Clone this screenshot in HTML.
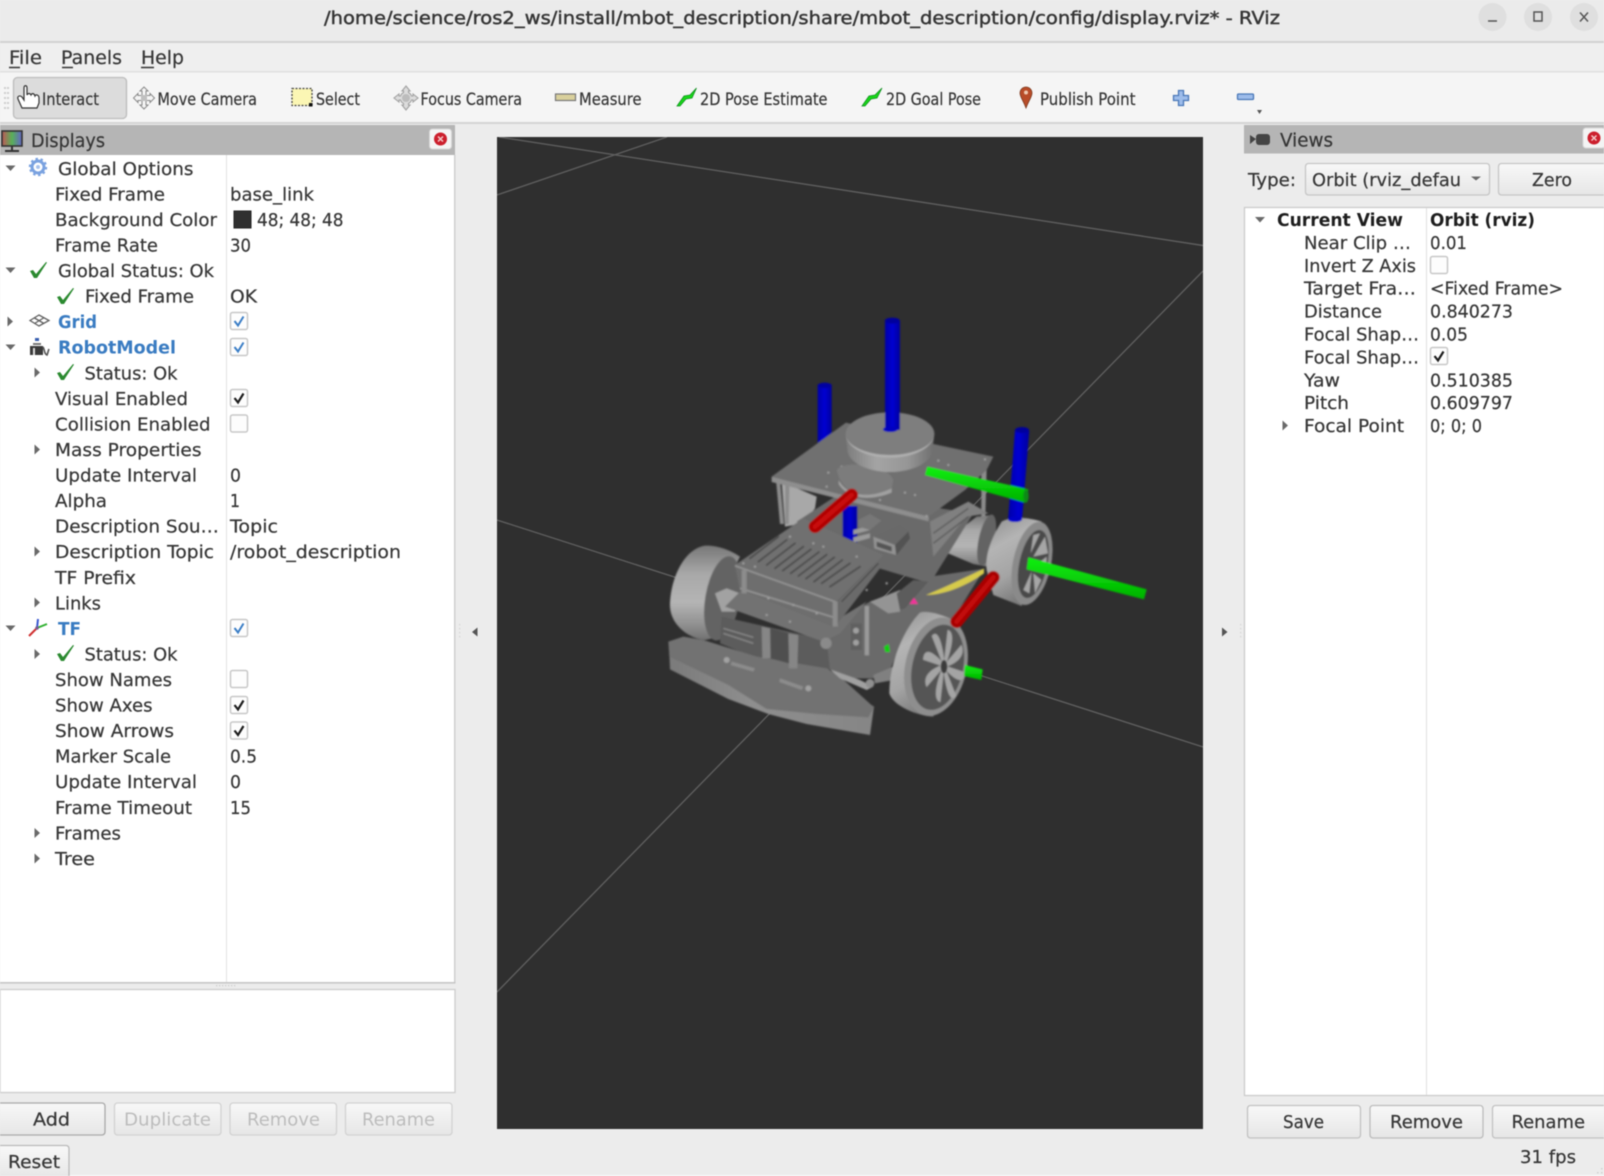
<!DOCTYPE html>
<html>
<head>
<meta charset="utf-8">
<title>RViz</title>
<style>
html,body{margin:0;padding:0;background:#ececec;width:1604px;height:1176px;overflow:hidden}
svg{display:block;filter:blur(.45px)}
text{font-family:"DejaVu Sans","Liberation Sans",sans-serif;font-size:18px;fill:#363636;stroke:#363636;stroke-width:.22px}
.tb{font-size:17px}
.lnk{fill:#3a7cc2;stroke:#3a7cc2;font-weight:bold;stroke-width:0}
.b{font-weight:bold;fill:#1e1e1e;stroke-width:0}
.dis{fill:#bcbcbc;stroke-width:0}
</style>
</head>
<body>
<svg xmlns="http://www.w3.org/2000/svg" width="1604" height="1176" viewBox="0 0 1604 1176">
<defs>
<linearGradient id="btn" x1="0" y1="0" x2="0" y2="1"><stop offset="0" stop-color="#f8f8f8"/><stop offset="1" stop-color="#e6e6e6"/></linearGradient>
<linearGradient id="tread" x1="0" y1="0" x2="0" y2="1"><stop offset="0" stop-color="#777"/><stop offset=".3" stop-color="#a8a8a8"/><stop offset=".6" stop-color="#b4b4b4"/><stop offset=".85" stop-color="#8e8e8e"/><stop offset="1" stop-color="#707070"/></linearGradient>
<linearGradient id="tread2" x1="0" y1="0" x2=".35" y2="1"><stop offset="0" stop-color="#8e8e8e"/><stop offset=".35" stop-color="#b4b4b4"/><stop offset=".7" stop-color="#a4a4a4"/><stop offset="1" stop-color="#7c7c7c"/></linearGradient>
<linearGradient id="lid" x1="0" y1="0" x2="1" y2="0"><stop offset="0" stop-color="#7c7c7c"/><stop offset=".35" stop-color="#a4a4a4"/><stop offset=".7" stop-color="#969696"/><stop offset="1" stop-color="#6e6e6e"/></linearGradient>
<linearGradient id="side" x1="0" y1="0" x2="1" y2="0"><stop offset="0" stop-color="#7a7a7a"/><stop offset=".4" stop-color="#8e8e8e"/><stop offset="1" stop-color="#858585"/></linearGradient>
<linearGradient id="grn" x1="0" y1="0" x2="0" y2="1"><stop offset="0" stop-color="#10f010"/><stop offset="1" stop-color="#00b000"/></linearGradient>
<linearGradient id="blu" x1="0" y1="0" x2="1" y2="0"><stop offset="0" stop-color="#0000a8"/><stop offset=".5" stop-color="#0000d2"/><stop offset="1" stop-color="#00009c"/></linearGradient>
<linearGradient id="scr" x1="0" y1="0" x2="1" y2="0"><stop offset="0" stop-color="#c05858"/><stop offset=".5" stop-color="#58b058"/><stop offset="1" stop-color="#6464c8"/></linearGradient>
<filter id="soft" x="-5%" y="-5%" width="110%" height="110%"><feGaussianBlur stdDeviation="2.4"/></filter>
<clipPath id="cb"><rect x="1305" y="163" width="156" height="32"/></clipPath>
<clipPath id="vp"><rect x="497" y="137" width="706" height="992"/></clipPath>
<path id="ck" d="M-8,1 L-5,0 L-2,4 L8,-8 L9,-7.5 L-1,8 L-4,8 Z" fill="#2b8a30"/>
<g id="box"><rect x="0.5" y="0.5" width="17" height="17" rx="2" fill="#fdfdfd" stroke="#c8c8c8" stroke-width="1.5"/></g>
<g id="boxk"><use href="#box"/><path d="M4.5,9 L8,13.5 L13.5,4.5" fill="none" stroke="#1d1d1d" stroke-width="2.2"/></g>
<g id="boxb"><use href="#box"/><path d="M4.5,9 L8,13.5 L13.5,4.5" fill="none" stroke="#3b7ec6" stroke-width="2"/></g>
<path id="ad" d="M-5,-2.5 L5,-2.5 L0,3 Z" fill="#6a6a6a"/>
<path id="ar" d="M-2.5,-5 L3,0 L-2.5,5 Z" fill="#6a6a6a"/>
<g id="close"><rect x="0" y="0" width="22" height="20" rx="3" fill="#f4f4f4" stroke="#d8d8d8"/><circle cx="11" cy="10" r="6.5" fill="#cc1f2d"/><path d="M8.5,7.5 L13.5,12.5 M13.5,7.5 L8.5,12.5" stroke="#f3c9c9" stroke-width="1.5"/></g>
<path id="fin" d="M0,-8 L12,-70 C30,-68 36,-50 8,-6 Z"/>
</defs>

<rect width="1604" height="1176" fill="#ececec"/>
<rect width="1604" height="41" fill="#ebebeb"/>
<rect y="41" width="1604" height="2" fill="#d2d2d2"/>
<rect y="43" width="1604" height="29" fill="#efefef"/>
<rect y="71" width="1604" height="1.5" fill="#e0e0e0"/>
<rect y="72.5" width="1604" height="49.5" fill="#f5f5f5"/>
<rect y="122" width="1604" height="2" fill="#d4d4d4"/>
<rect y="1175" width="1604" height="1" fill="#fafafa"/>

<text x="324" y="24" textLength="956" lengthAdjust="spacingAndGlyphs" style="stroke-width:.45px">/home/science/ros2_ws/install/mbot_description/share/mbot_description/config/display.rviz* - RViz</text>
<circle cx="1492.5" cy="17" r="14" fill="#dfdfdf"/><circle cx="1538" cy="17" r="14" fill="#dfdfdf"/><circle cx="1584" cy="17" r="14" fill="#dfdfdf"/>
<path d="M1488,21 H1497" stroke="#555" stroke-width="1.5"/>
<rect x="1534" y="12" width="8" height="9" fill="none" stroke="#555" stroke-width="1.5"/>
<path d="M1580,12.5 L1588,21.5 M1588,12.5 L1580,21.5" stroke="#555" stroke-width="1.5"/>

<text x="9" y="64" style="font-size:19px" textLength="33" lengthAdjust="spacingAndGlyphs">File</text>
<text x="61" y="64" style="font-size:19px" textLength="61" lengthAdjust="spacingAndGlyphs">Panels</text>
<text x="141" y="64" style="font-size:19px" textLength="43" lengthAdjust="spacingAndGlyphs">Help</text>
<path d="M9,67.5 H20 M62,67.5 H73 M141,67.5 H154" stroke="#333" stroke-width="1.6"/>

<g fill="#cfcfcf"><rect x="4" y="87" width="2" height="2"/><rect x="7" y="87" width="2" height="2"/><rect x="4" y="92" width="2" height="2"/><rect x="7" y="92" width="2" height="2"/><rect x="4" y="97" width="2" height="2"/><rect x="7" y="97" width="2" height="2"/><rect x="4" y="102" width="2" height="2"/><rect x="7" y="102" width="2" height="2"/><rect x="4" y="107" width="2" height="2"/><rect x="7" y="107" width="2" height="2"/></g>
<rect x="13.5" y="77.5" width="113" height="41" rx="4" fill="#dcdcdc" stroke="#bdbdbd" stroke-width="1.3"/>
<path d="M22,108 L18,99 C17,96 20,95 22,97 L24,100 L24,88 C24,85 27,85 27,88 L27,95 C28,93 30,93 31,95 C32,93 34,93 35,96 C36,94 39,95 39,98 L39,103 L37,108 Z" fill="#fff" stroke="#333" stroke-width="1.2"/>
<text class="tb" x="42" y="105" textLength="57" lengthAdjust="spacingAndGlyphs">Interact</text>
<g fill="#f4f4f4" stroke="#8a8a8a" stroke-width="1"><path d="M144,87 L148,91 H146 V95.5 H150 V93.5 L154.5,98 L150,102.5 V100.5 H146 V105 H148 L144,109 L140,105 H142 V100.5 H138 V102.5 L133.5,98 L138,93.5 V95.5 H142 V91 H140 Z"/></g>
<rect x="141" y="95" width="6" height="6" fill="#c0c0c0"/>
<text class="tb" x="157.5" y="105" textLength="99.5" lengthAdjust="spacingAndGlyphs">Move Camera</text>
<rect x="292" y="88.5" width="20" height="17" fill="#fbf6b4" stroke="#444" stroke-width="1.3" stroke-dasharray="2 1.5"/><rect x="309" y="103" width="3.5" height="3.5" fill="#111"/>
<text class="tb" x="316" y="105" textLength="44" lengthAdjust="spacingAndGlyphs">Select</text>
<path d="M406,86 L410,91 H408.5 V92.5 A6,6 0 0 1 411.5,96 H413 V94 L418,98 L413,102 V100 H411.5 A6,6 0 0 1 408.5,103.5 V105 H410 L406,110 L402,105 H403.5 V103.5 A6,6 0 0 1 400.5,100 H399 V102 L394,98 L399,94 V96 H400.5 A6,6 0 0 1 403.5,92.5 V91 H402 Z" fill="#dcdcdc" stroke="#a2a2a2" stroke-width="1.1"/>
<circle cx="406" cy="98" r="4" fill="#bcbcbc"/>
<text class="tb" x="420.5" y="105" textLength="101.5" lengthAdjust="spacingAndGlyphs">Focus Camera</text>
<rect x="555.5" y="94" width="20" height="6.5" fill="#d9d09c" stroke="#777" stroke-width="1.2"/>
<text class="tb" x="579" y="105" textLength="62.5" lengthAdjust="spacingAndGlyphs">Measure</text>
<path d="M677,106 L684,96 L690,95 L696.5,88 L692,98 L686,99 L680,106 Z" fill="#18d818" stroke="#0e8f1e" stroke-width=".8"/>
<text class="tb" x="700" y="105" textLength="127.5" lengthAdjust="spacingAndGlyphs">2D Pose Estimate</text>
<path d="M862,106 L869,96 L875,95 L882,88 L877,98 L871,99 L865,106 Z" fill="#18d818" stroke="#0e8f1e" stroke-width=".8"/>
<text class="tb" x="886" y="105" textLength="95" lengthAdjust="spacingAndGlyphs">2D Goal Pose</text>
<path d="M1026,108 C1023,100 1020,97 1020,93 A6,6 0 0 1 1032,93 C1032,97 1029,100 1026,108 Z" fill="#b84c28" stroke="#7a3a20" stroke-width=".8"/><circle cx="1026" cy="92.5" r="2" fill="#eec9b0"/>
<text class="tb" x="1040" y="105" textLength="95.5" lengthAdjust="spacingAndGlyphs">Publish Point</text>
<path d="M1178.5,90.5 H1183.5 V95.5 H1188.5 V100.5 H1183.5 V105.5 H1178.5 V100.5 H1173.5 V95.5 H1178.5 Z" fill="#9dbcea" stroke="#4a78b8" stroke-width="1.3"/>
<rect x="1237.5" y="94" width="16" height="5.5" rx="1" fill="#9dbcea" stroke="#4a78b8" stroke-width="1.3"/>
<path d="M1257,110 H1262 L1259.5,114 Z" fill="#555"/>

<rect x="0" y="125" width="455" height="30" fill="#b5b5b5"/>
<rect x="2" y="131" width="20" height="15" fill="url(#scr)" stroke="#333" stroke-width="1.6"/>
<path d="M12,146 V150 M5,151 H19" stroke="#333" stroke-width="2"/>
<text x="31" y="147" style="font-size:19px" textLength="74" lengthAdjust="spacingAndGlyphs">Displays</text>
<use href="#close" x="429.5" y="129"/>
<rect x="0" y="155" width="455" height="827" fill="#fff"/>
<rect x="226" y="155" width="1" height="827" fill="#e2e2e2"/>
<rect x="454" y="155" width="1.5" height="828" fill="#cfcfcf"/>
<rect x="0" y="982" width="455.5" height="1.6" fill="#c6c6c6"/>
<rect x="0" y="989.5" width="455" height="103" fill="#fff" stroke="#cdcdcd" stroke-width="1.3"/>
<g fill="#cdcdcd"><rect x="216" y="985" width="1.3" height="1.3"/><rect x="219" y="985" width="1.3" height="1.3"/><rect x="222" y="985" width="1.3" height="1.3"/><rect x="225" y="985" width="1.3" height="1.3"/><rect x="228" y="985" width="1.3" height="1.3"/><rect x="231" y="985" width="1.3" height="1.3"/><rect x="234" y="985" width="1.3" height="1.3"/></g>

<text x="58" y="174.8" textLength="135.5" lengthAdjust="spacingAndGlyphs">Global Options</text>
<text x="55" y="200.4" textLength="110" lengthAdjust="spacingAndGlyphs">Fixed Frame</text>
<text x="55" y="225.9" textLength="162" lengthAdjust="spacingAndGlyphs">Background Color</text>
<text x="55" y="251.5" textLength="103" lengthAdjust="spacingAndGlyphs">Frame Rate</text>
<text x="58" y="277" textLength="156" lengthAdjust="spacingAndGlyphs">Global Status: Ok</text>
<text x="85" y="302.6" textLength="109" lengthAdjust="spacingAndGlyphs">Fixed Frame</text>
<text class="lnk" x="58" y="328.2" textLength="39" lengthAdjust="spacingAndGlyphs">Grid</text>
<text class="lnk" x="58" y="353.7" textLength="118" lengthAdjust="spacingAndGlyphs">RobotModel</text>
<text x="84.5" y="379.3" textLength="93" lengthAdjust="spacingAndGlyphs">Status: Ok</text>
<text x="55" y="404.8" textLength="133" lengthAdjust="spacingAndGlyphs">Visual Enabled</text>
<text x="55" y="430.4" textLength="155.5" lengthAdjust="spacingAndGlyphs">Collision Enabled</text>
<text x="55" y="456" textLength="146.5" lengthAdjust="spacingAndGlyphs">Mass Properties</text>
<text x="55" y="481.5" textLength="142" lengthAdjust="spacingAndGlyphs">Update Interval</text>
<text x="55" y="507.1" textLength="52" lengthAdjust="spacingAndGlyphs">Alpha</text>
<text x="55" y="532.6" textLength="164" lengthAdjust="spacingAndGlyphs">Description Sou…</text>
<text x="55" y="558.2" textLength="159" lengthAdjust="spacingAndGlyphs">Description Topic</text>
<text x="55" y="583.8" textLength="81" lengthAdjust="spacingAndGlyphs">TF Prefix</text>
<text x="55" y="609.3" textLength="46" lengthAdjust="spacingAndGlyphs">Links</text>
<text class="lnk" x="58" y="634.9" textLength="23" lengthAdjust="spacingAndGlyphs">TF</text>
<text x="84.5" y="660.4" textLength="93" lengthAdjust="spacingAndGlyphs">Status: Ok</text>
<text x="55" y="686" textLength="117" lengthAdjust="spacingAndGlyphs">Show Names</text>
<text x="55" y="711.6" textLength="97.5" lengthAdjust="spacingAndGlyphs">Show Axes</text>
<text x="55" y="737.1" textLength="119" lengthAdjust="spacingAndGlyphs">Show Arrows</text>
<text x="55" y="762.7" textLength="116" lengthAdjust="spacingAndGlyphs">Marker Scale</text>
<text x="55" y="788.2" textLength="142" lengthAdjust="spacingAndGlyphs">Update Interval</text>
<text x="55" y="813.8" textLength="137" lengthAdjust="spacingAndGlyphs">Frame Timeout</text>
<text x="55" y="839.4" textLength="66" lengthAdjust="spacingAndGlyphs">Frames</text>
<text x="55" y="864.9" textLength="40" lengthAdjust="spacingAndGlyphs">Tree</text>

<text x="230" y="200.4" textLength="84" lengthAdjust="spacingAndGlyphs">base_link</text>
<rect x="234" y="211" width="17" height="17" fill="#303030" stroke="#222"/>
<text x="257" y="225.9" textLength="86.5" lengthAdjust="spacingAndGlyphs">48; 48; 48</text>
<text x="230" y="251.5" textLength="21" lengthAdjust="spacingAndGlyphs">30</text>
<text x="230" y="302.6" textLength="27" lengthAdjust="spacingAndGlyphs">OK</text>
<text x="230" y="481.5" textLength="11" lengthAdjust="spacingAndGlyphs">0</text>
<text x="230" y="507.1" textLength="10" lengthAdjust="spacingAndGlyphs">1</text>
<text x="230" y="532.6" textLength="48" lengthAdjust="spacingAndGlyphs">Topic</text>
<text x="230" y="558.2" textLength="171" lengthAdjust="spacingAndGlyphs">/robot_description</text>
<text x="230" y="762.7" textLength="27" lengthAdjust="spacingAndGlyphs">0.5</text>
<text x="230" y="788.2" textLength="11" lengthAdjust="spacingAndGlyphs">0</text>
<text x="230" y="813.8" textLength="21" lengthAdjust="spacingAndGlyphs">15</text>

<use href="#boxb" x="230" y="312"/>
<use href="#boxb" x="230" y="338"/>
<use href="#boxk" x="230" y="389"/>
<use href="#box" x="230" y="414.5"/>
<use href="#boxb" x="230" y="619"/>
<use href="#box" x="230" y="670"/>
<use href="#boxk" x="230" y="696"/>
<use href="#boxk" x="230" y="721.5"/>

<use href="#ad" x="10.5" y="168"/>
<use href="#ad" x="10.5" y="270"/>
<use href="#ar" x="10" y="321.5"/>
<use href="#ad" x="10.5" y="347"/>
<use href="#ar" x="37" y="372.5"/>
<use href="#ar" x="37" y="449.5"/>
<use href="#ar" x="37" y="551.5"/>
<use href="#ar" x="37" y="602.5"/>
<use href="#ad" x="10.5" y="628"/>
<use href="#ar" x="37" y="654"/>
<use href="#ar" x="37" y="833"/>
<use href="#ar" x="37" y="858.5"/>

<circle cx="38" cy="167" r="6" fill="none" stroke="#7aa2e0" stroke-width="3"/>
<circle cx="38" cy="167" r="8" fill="none" stroke="#7aa2e0" stroke-width="2.4" stroke-dasharray="2.4 2.6"/>
<circle cx="38" cy="167" r="2" fill="#a8c2ec"/>
<use href="#ck" x="38" y="270"/>
<use href="#ck" x="65" y="296"/>
<use href="#ck" x="65" y="372"/>
<use href="#ck" x="65" y="653"/>
<path d="M30,320.5 L39,315 L49,320.5 L39,326 Z M34.5,318 L44,323.5 M43.5,318 L34.5,323.5" fill="none" stroke="#606060" stroke-width="1.3"/>
<g>
<rect x="35" y="338" width="4" height="3" fill="#3a60b0"/>
<rect x="33" y="343" width="8" height="2" fill="#777"/>
<rect x="30" y="346" width="13" height="9" fill="#3a3a3a"/>
<rect x="33" y="348" width="2" height="7" fill="#ddd"/>
<path d="M43,347 C45,350 44,354 47,355 C48,353 48,351 49,349" fill="none" stroke="#555" stroke-width="1.6"/>
</g>
<path d="M37,628 L38,619" stroke="#3a58d0" stroke-width="2"/>
<path d="M37,628 L47,624" stroke="#30b030" stroke-width="2"/>
<path d="M37,628 L29,636" stroke="#d03030" stroke-width="2"/>
<circle cx="37" cy="628" r="1.8" fill="#7a5a90"/>

<rect x="-3" y="1103" width="108" height="32" rx="3" fill="url(#btn)" stroke="#a9a9a9" stroke-width="1.3"/>
<text x="33" y="1125.5" textLength="37" lengthAdjust="spacingAndGlyphs">Add</text>
<rect x="114.5" y="1103" width="106.5" height="32" rx="3" fill="url(#btn)" stroke="#d2d2d2" stroke-width="1.3"/>
<text class="dis" x="124" y="1125.5" textLength="87" lengthAdjust="spacingAndGlyphs">Duplicate</text>
<rect x="230" y="1103" width="106.5" height="32" rx="3" fill="url(#btn)" stroke="#d2d2d2" stroke-width="1.3"/>
<text class="dis" x="247" y="1125.5" textLength="73" lengthAdjust="spacingAndGlyphs">Remove</text>
<rect x="345.5" y="1103" width="106.5" height="32" rx="3" fill="url(#btn)" stroke="#d2d2d2" stroke-width="1.3"/>
<text class="dis" x="362" y="1125.5" textLength="73" lengthAdjust="spacingAndGlyphs">Rename</text>
<rect x="-3" y="1145.5" width="72" height="34" rx="3" fill="url(#btn)" stroke="#b9b9b9" stroke-width="1.3"/>
<text x="8" y="1168" textLength="52" lengthAdjust="spacingAndGlyphs">Reset</text>

<path d="M477.5,627.5 V636.5 L472,632 Z" fill="#555"/>
<path d="M1222,627.5 V636.5 L1227.5,632 Z" fill="#555"/>
<g fill="#d4d4d4"><rect x="459" y="624" width="1.3" height="1.3"/><rect x="459" y="628" width="1.3" height="1.3"/><rect x="459" y="632" width="1.3" height="1.3"/><rect x="459" y="636" width="1.3" height="1.3"/><rect x="1240" y="624" width="1.3" height="1.3"/><rect x="1240" y="628" width="1.3" height="1.3"/><rect x="1240" y="632" width="1.3" height="1.3"/><rect x="1240" y="636" width="1.3" height="1.3"/></g>

<rect x="497" y="137" width="706" height="992" fill="#2f2f2f"/>
<g clip-path="url(#vp)" stroke="#5e5e5e" stroke-width="1.4">
<line x1="497" y1="195" x2="667" y2="137"/>
<line x1="499" y1="137" x2="1203" y2="245.5"/>
<line x1="497" y1="520" x2="1203" y2="747"/>
<line x1="1203" y1="271" x2="497" y2="992"/>
</g>

<g transform="translate(640 300) scale(.33333)" filter="url(#soft)">
<rect x="533" y="256" width="42" height="180" fill="url(#blu)"/><ellipse cx="554" cy="256" rx="21" ry="8" fill="#0000a0"/>
<path d="M425,545 L530,590 L525,625 L490,670 L435,680 Z" fill="#a8a8a8"/>
<path d="M912,755 L945,700 L1010,650 L1060,645 L1040,800 L1000,792 Z" fill="url(#tread)"/>
<ellipse cx="1040" cy="720" rx="24" ry="78" transform="rotate(12 1040 720)" fill="#636363"/>
<path d="M408,540 L420,540 L432,672 L420,672 Z M436,548 L448,552 L446,672 L436,672 Z M1024,505 L1040,505 L1036,650 L1024,650 Z M852,645 L868,650 L868,835 L852,835 Z" fill="#8c8c8c"/>
<path d="M470,665 L600,580 L1000,640 L870,850 L700,800 Z" fill="#6a6a6a"/>
<path d="M870,665 L985,605 L1045,640 L980,650 L880,770 Z" fill="#808080"/>
<path d="M880,700 L985,625 M880,730 L985,650" stroke="#5a5a5a" stroke-width="4"/>
<path d="M395,530 L618,368 L880,432 L1060,470 L1040,510 L975,570 L866,650 Z" fill="#6f6f6f"/>
<path d="M395,530 L866,650 L866,664 L395,546 Z" fill="#8e8e8e"/>
<g fill="#a0a0a0"><circle cx="565" cy="518" r="3.5"/><circle cx="605" cy="500" r="3.5"/><circle cx="560" cy="560" r="3.5"/><circle cx="720" cy="600" r="3.5"/><circle cx="795" cy="578" r="3.5"/><circle cx="825" cy="585" r="3.5"/><circle cx="895" cy="482" r="3.5"/><circle cx="925" cy="495" r="3.5"/><circle cx="1035" cy="478" r="3.5"/><circle cx="860" cy="648" r="3.5"/></g>
<path d="M590,510 C610,480 740,490 760,540 L755,570 L690,590 C640,590 600,560 590,510 Z" fill="#7c7c7c"/>
<path d="M596,540 C620,585 680,600 755,565 L755,578 C680,608 620,592 596,552 Z" fill="#a0a0a0"/>
<path d="M617,402 L622,448 A128,68 0 0 0 878,448 L883,402 Z" fill="url(#lid)"/>
<ellipse cx="750" cy="401" rx="133" ry="64" fill="#7e7e7e"/>
<path d="M617,401 A133,64 0 0 0 883,401 A133,72 0 0 1 617,401 Z" fill="#b0b0b0"/>
<rect x="608" y="618" width="44" height="110" fill="url(#blu)"/>
<path d="M640,690 L690,676 L690,690 L640,704 Z M640,712 L690,700 L690,714 L640,728 Z" fill="#9a9a9a"/>
<path d="M655,660 L690,642 L724,662 L690,690 L655,680 Z" fill="#777"/>
<path d="M700,710 L780,675 L810,695 L770,760 L705,745 Z" fill="#696969"/>
<path d="M700,710 L765,735 L768,765 L703,745 Z" fill="#929292"/>
<path d="M710,725 L755,740 L755,755 L710,740 Z" fill="#555"/>
<path d="M765,735 L805,695 L810,715 L770,765 Z" fill="#525252"/>
<!-- left wheel -->
<path d="M195,737 C130,747 90,840 90,920 C93,978 150,1017 195,1020 L240,1010 L235,900 L300,770 C265,745 220,735 195,737 Z" fill="url(#tread)"/>
<ellipse cx="248" cy="895" rx="52" ry="128" transform="rotate(10 248 895)" fill="#636363"/>
<path d="M225,880 L260,865 L300,880 L285,935 L245,935 Z" fill="#a2a2a2"/>
<path d="M250,960 L310,965 L300,985 L255,985 Z M250,1005 L310,1020 L255,1025 Z" fill="#8c8c8c"/>
<!-- right wheel -->
<path d="M1085,665 C1050,720 1035,770 1040,810 L1060,885 L1145,918 L1205,665 C1160,650 1110,650 1085,665 Z" fill="url(#tread2)"/>
<ellipse cx="1176" cy="790" rx="57" ry="127" transform="rotate(12 1176 790)" fill="#8a8a8a"/>
<ellipse cx="1180" cy="792" rx="42" ry="104" transform="rotate(12 1180 792)" fill="#4a4a4a"/>
<path d="M1180,770 L1215,710 L1224,760 Z M1182,800 L1220,770 L1218,810 Z M1175,815 L1150,870 L1168,880 Z M1180,820 L1185,880 L1204,840 Z M1172,760 L1180,705 L1200,700 Z" fill="#a6a6a6"/>
<!-- right lower deck: filled out to the rear wheel and front wheel -->
<path d="M530,1000 L690,905 L780,880 L870,830 L1034,806 L1000,860 L940,955 L830,970 L770,1060 L740,1135 L600,1135 L520,1060 Z" fill="#6a6a6a"/>
<path d="M858,885 C920,860 980,830 1032,806 L1032,820 C990,850 920,885 858,885 Z" fill="#d6ca4c"/>
<path d="M690,905 L780,870 L780,935 L745,940 Z" fill="#949494"/>
<path d="M770,880 L820,840 L865,845 L795,925 L780,930 Z" fill="#5c5c5c"/>
<path d="M808,912 L822,893 L834,912 Z" fill="#f0309a"/>
<rect x="674" y="918" width="13" height="148" fill="#9a9a9a"/>
<rect x="632" y="970" width="34" height="80" fill="#606060"/>
<circle cx="648" cy="992" r="9" fill="#a0a0a0"/><circle cx="648" cy="1028" r="9" fill="#a0a0a0"/>
<path d="M732,1040 L746,1032 L750,1056 L736,1056 Z" fill="#10d010"/>
<path d="M245,950 L560,1020 L570,1110 L350,1075 L240,1030 Z" fill="#5c5c5c"/>
<path d="M250,1000 L340,1030 M250,985 L340,1012" stroke="#8a8a8a" stroke-width="4"/>
<!-- bottom plate -->
<path d="M88,1060 L90,1108 L265,1197 L385,1242 L500,1272 L690,1305 L702,1220 L600,1160 Z" fill="url(#side)"/>
<path d="M85,1025 L130,1010 L190,1020 L350,1070 L560,1105 L600,1130 L702,1222 L685,1252 L530,1242 L380,1227 L265,1155 L88,1070 Z" fill="#727272"/>
<path d="M275,1085 L345,1105 L340,1115 L272,1095 Z M420,1135 L490,1160 L485,1170 L418,1146 Z" fill="#8c8c8c"/>
<circle cx="260" cy="1080" r="9" fill="#a2a2a2"/><circle cx="505" cy="1165" r="9" fill="#a2a2a2"/>
<path d="M570,1108 L660,1140 L700,1160 L680,1170 L600,1135 Z" fill="#a0a0a0"/>
<circle cx="690" cy="1150" r="13" fill="#8f8f8f"/>
<path d="M700,1125 L760,1100 L760,1140 L705,1150 Z" fill="#808080"/>
<path d="M365,980 L390,985 L392,1075 L367,1075 Z M445,1000 L475,1005 L472,1105 L447,1105 Z" fill="#868686"/>
<path d="M392,985 L445,1000 L447,1090 L392,1075 Z" fill="#505050"/>
<path d="M255,920 L310,865 L590,960 L680,905 L600,1000 L550,1025 Z" fill="#727272"/>
<circle cx="558" cy="1030" r="17" fill="#8a8a8a"/>
<!-- slotted deck -->
<path d="M285,795 L300,870 L590,985 L590,905 Z" fill="#6e6e6e"/>
<path d="M590,905 L730,765 L720,805 L590,975 Z" fill="#6a6a6a"/>
<path d="M605,905 L715,790" stroke="#484848" stroke-width="4"/>
<path d="M285,795 L490,655 L730,765 L590,905 Z" fill="#707070"/>
<path d="M285,797 L590,907 M300,865 L590,955" stroke="#949494" stroke-width="5" fill="none"/>
<rect x="305" y="810" width="15" height="70" fill="#8c8c8c"/>
<rect x="578" y="905" width="15" height="75" fill="#8c8c8c"/>
<g stroke="#484848" stroke-width="5" stroke-linecap="round">
<line x1="330" y1="775" x2="415" y2="710"/><line x1="355" y1="785" x2="440" y2="720"/><line x1="380" y1="795" x2="465" y2="730"/><line x1="405" y1="805" x2="490" y2="740"/><line x1="428" y1="812" x2="513" y2="748"/><line x1="452" y1="820" x2="537" y2="756"/><line x1="475" y1="828" x2="560" y2="764"/><line x1="498" y1="836" x2="583" y2="772"/><line x1="522" y1="845" x2="607" y2="780"/><line x1="545" y1="850" x2="630" y2="790"/><line x1="570" y1="860" x2="660" y2="800"/>
</g>
<g fill="#a0a0a0"><circle cx="310" cy="790" r="3.5"/><circle cx="345" cy="800" r="3.5"/><circle cx="450" cy="710" r="3.5"/><circle cx="520" cy="730" r="3.5"/><circle cx="550" cy="740" r="3.5"/><circle cx="650" cy="770" r="3.5"/><circle cx="385" cy="895" r="3.5"/><circle cx="460" cy="915" r="3.5"/><circle cx="530" cy="940" r="3.5"/><circle cx="450" cy="965" r="3.5"/><circle cx="380" cy="945" r="3.5"/><circle cx="740" cy="850" r="3.5"/><circle cx="680" cy="870" r="3.5"/></g>
<!-- front wheel -->
<path d="M840,938 C790,990 748,1090 748,1180 C760,1218 830,1247 880,1250 L950,965 C900,940 860,932 840,938 Z" fill="url(#tread2)"/>
<ellipse cx="888" cy="1100" rx="92" ry="150" transform="rotate(13 888 1100)" fill="#8e8e8e"/>
<ellipse cx="893" cy="1102" rx="76" ry="130" transform="rotate(13 893 1102)" fill="#555"/>
<g transform="translate(912 1098) scale(.9 1.55)" fill="#a4a4a4">
<use href="#fin"/><use href="#fin" transform="rotate(45)"/><use href="#fin" transform="rotate(90)"/><use href="#fin" transform="rotate(135)"/><use href="#fin" transform="rotate(180)"/><use href="#fin" transform="rotate(225)"/><use href="#fin" transform="rotate(270)"/><use href="#fin" transform="rotate(315)"/>
</g>
<ellipse cx="912" cy="1100" rx="10" ry="20" fill="#3a3a3a"/>
<!-- axes -->
<path d="M975,1095 L1028,1108 L1024,1140 L972,1128 Z" fill="url(#grn)"/>
<path d="M1165,772 L1520,868 L1512,898 L1160,808 Z" fill="url(#grn)"/>
<path d="M525,680 L635,585" stroke="#b00000" stroke-width="38" stroke-linecap="round"/>
<path d="M525,680 L635,585" stroke="#c80a0a" stroke-width="14" stroke-linecap="round"/>
<path d="M950,965 L1060,832" stroke="#a80000" stroke-width="38" stroke-linecap="round"/>
<path d="M950,965 L1060,832" stroke="#c20a0a" stroke-width="14" stroke-linecap="round"/>
<rect x="735" y="62" width="45" height="328" fill="url(#blu)"/><ellipse cx="757" cy="62" rx="22.5" ry="9" fill="#00009c"/><ellipse cx="751" cy="388" rx="22" ry="8" fill="#0000c0"/>
<path d="M1125,390 L1168,392 L1146,660 L1104,660 Z" fill="url(#blu)"/><ellipse cx="1146" cy="390" rx="21" ry="9" fill="#00009c"/><ellipse cx="1125" cy="658" rx="21" ry="8" fill="#0000c8"/>
<path d="M862,500 L1165,568 L1155,608 L855,525 Z" fill="url(#grn)"/>
<ellipse cx="1158" cy="588" rx="8" ry="20" fill="#0a8a14"/>
</g>

<rect x="1244" y="125" width="360" height="28.5" fill="#b5b5b5"/>
<path d="M1250,135 L1256,139 L1250,144 Z" fill="#444"/><rect x="1256" y="134" width="14" height="11" rx="3" fill="#444"/>
<text x="1280" y="146.7" style="font-size:19px" textLength="53" lengthAdjust="spacingAndGlyphs">Views</text>
<use href="#close" x="1583" y="128"/>
<text x="1248" y="186" textLength="48" lengthAdjust="spacingAndGlyphs">Type:</text>
<rect x="1305.5" y="163.5" width="184" height="31.5" rx="3" fill="url(#btn)" stroke="#c6c6c6" stroke-width="1.3"/>
<g clip-path="url(#cb)"><text x="1312" y="186" textLength="168" lengthAdjust="spacingAndGlyphs">Orbit (rviz_default)</text></g>
<path d="M1471,176.5 H1481 L1476,180.5 Z" fill="#6a6a6a"/>
<rect x="1498.5" y="163.5" width="112" height="31.5" rx="3" fill="url(#btn)" stroke="#c6c6c6" stroke-width="1.3"/>
<text x="1532" y="186" textLength="40" lengthAdjust="spacingAndGlyphs">Zero</text>

<rect x="1244.5" y="207.5" width="365" height="888" fill="#fff" stroke="#cccccc" stroke-width="1.3"/>
<rect x="1426" y="208" width="1" height="887" fill="#e0e0e0"/>
<use href="#ad" x="1260" y="219.5"/>
<text class="b" x="1277" y="226" textLength="126" lengthAdjust="spacingAndGlyphs">Current View</text>
<text class="b" x="1430" y="226" textLength="105" lengthAdjust="spacingAndGlyphs">Orbit (rviz)</text>
<text x="1304" y="248.9" textLength="107" lengthAdjust="spacingAndGlyphs">Near Clip …</text>
<text x="1430" y="248.9" textLength="37" lengthAdjust="spacingAndGlyphs">0.01</text>
<text x="1304" y="271.8" textLength="112" lengthAdjust="spacingAndGlyphs">Invert Z Axis</text>
<use href="#box" x="1430" y="256"/>
<text x="1304" y="294.7" textLength="112" lengthAdjust="spacingAndGlyphs">Target Fra…</text>
<text x="1430" y="294.7" textLength="133" lengthAdjust="spacingAndGlyphs">&lt;Fixed Frame&gt;</text>
<text x="1304" y="317.6" textLength="78" lengthAdjust="spacingAndGlyphs">Distance</text>
<text x="1430" y="317.6" textLength="83" lengthAdjust="spacingAndGlyphs">0.840273</text>
<text x="1304" y="340.5" textLength="115" lengthAdjust="spacingAndGlyphs">Focal Shap…</text>
<text x="1430" y="340.5" textLength="38" lengthAdjust="spacingAndGlyphs">0.05</text>
<text x="1304" y="363.4" textLength="115" lengthAdjust="spacingAndGlyphs">Focal Shap…</text>
<use href="#boxk" x="1430" y="347"/>
<text x="1304" y="386.3" textLength="36" lengthAdjust="spacingAndGlyphs">Yaw</text>
<text x="1430" y="386.3" textLength="83" lengthAdjust="spacingAndGlyphs">0.510385</text>
<text x="1304" y="409.2" textLength="45" lengthAdjust="spacingAndGlyphs">Pitch</text>
<text x="1430" y="409.2" textLength="83" lengthAdjust="spacingAndGlyphs">0.609797</text>
<use href="#ar" x="1285" y="425.5"/>
<text x="1304" y="432" textLength="100" lengthAdjust="spacingAndGlyphs">Focal Point</text>
<text x="1430" y="432" textLength="52" lengthAdjust="spacingAndGlyphs">0; 0; 0</text>

<rect x="1247.5" y="1105.5" width="113" height="32.5" rx="3" fill="url(#btn)" stroke="#c2c2c2" stroke-width="1.3"/>
<text x="1283" y="1128" textLength="41" lengthAdjust="spacingAndGlyphs">Save</text>
<rect x="1370" y="1105.5" width="113" height="32.5" rx="3" fill="url(#btn)" stroke="#bcbcbc" stroke-width="1.3"/>
<text x="1390" y="1128" textLength="73" lengthAdjust="spacingAndGlyphs">Remove</text>
<rect x="1492.5" y="1105.5" width="118" height="32.5" rx="3" fill="url(#btn)" stroke="#c2c2c2" stroke-width="1.3"/>
<text x="1511.5" y="1128" textLength="73.5" lengthAdjust="spacingAndGlyphs">Rename</text>
<text x="1520" y="1163" textLength="56" lengthAdjust="spacingAndGlyphs">31 fps</text>
<g fill="#d0d0d0"><rect x="1601" y="1168" width="1.5" height="1.5"/><rect x="1601" y="1172" width="1.5" height="1.5"/><rect x="1597" y="1172" width="1.5" height="1.5"/></g>
</svg>
</body>
</html>
